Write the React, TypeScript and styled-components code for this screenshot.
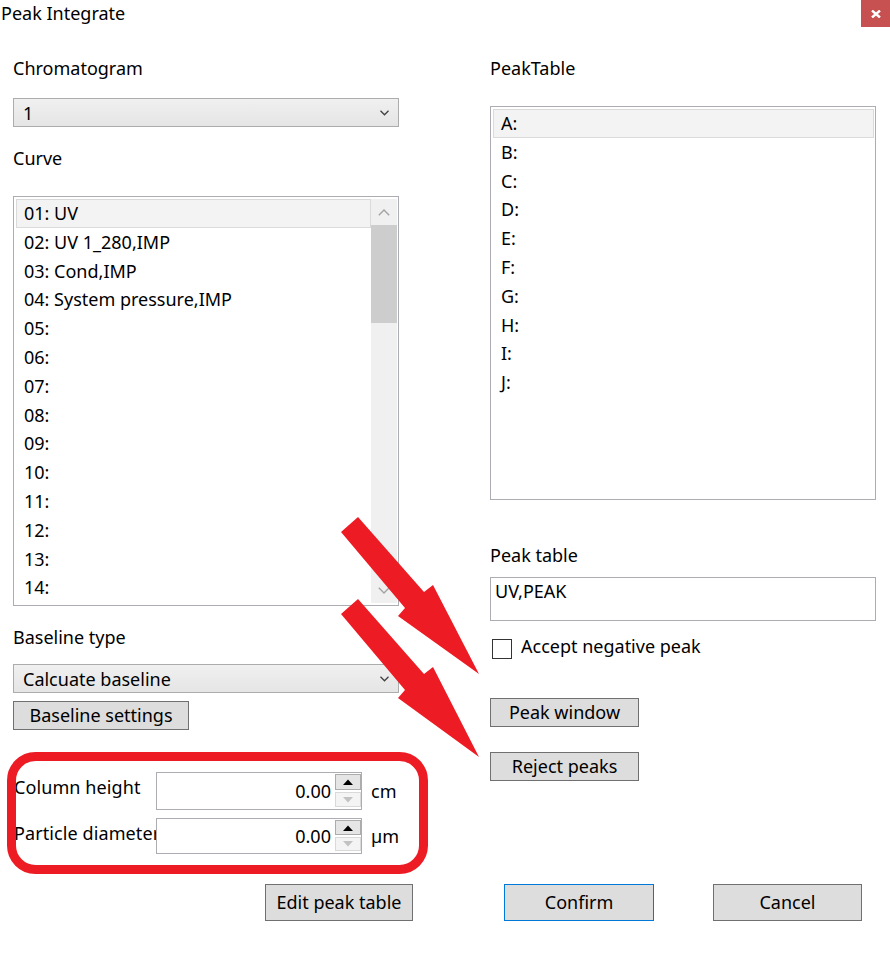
import React from "react";
import styled, { createGlobalStyle } from "styled-components";

const GlobalStyle = createGlobalStyle`
  html, body {
    margin: 0;
    padding: 0;
    background: #fff;
  }
  body {
    font-family: "Noto Sans", "Open Sans", sans-serif;
    font-size: 18px;
    color: #000;
  }
  * {
    box-sizing: border-box;
  }
`

const Window = styled.div`
  position: relative;
  width: 890px;
  height: 962px;
  overflow: hidden;
  background: #fff;
`

const TitleBar = styled.div`
  display: flex;
  justify-content: space-between;
  align-items: flex-start;
  height: 27px;
`

const Title = styled.div`
  padding-left: 1px;
  line-height: 27px;
`

const CloseButton = styled.div`
  display: flex;
  justify-content: center;
  align-items: center;
  width: 29px;
  height: 27px;
  background-color: #c75050;
`

const Columns = styled.div`
  display: flex;
  align-items: flex-start;
  gap: 91px;
  padding-left: 13px;
`

const Column = styled.div`
  display: flex;
  flex-direction: column;
  width: 386px;
`

const FieldLabel = styled.div<{ $top: number }>`
  margin-top: ${(p) => p.$top}px;
  line-height: 24px;
  white-space: nowrap;
`

const ComboBox = styled.div<{ $top: number }>`
  display: flex;
  justify-content: space-between;
  align-items: center;
  margin-top: ${(p) => p.$top}px;
  height: 29px;
  padding: 0 9px 0 9px;
  border: 1px solid #acacac;
  background: linear-gradient(#f0f0f0, #e5e5e5);
  line-height: 24px;
`

const ListBox = styled.div<{ $top: number; $height: number }>`
  display: flex;
  margin-top: ${(p) => p.$top}px;
  height: ${(p) => p.$height}px;
  padding: 2px 1px 2px 2px;
  border: 1px solid #abadb3;
  background: #fff;
  overflow: hidden;
`

const ListItems = styled.div`
  flex: 1;
  overflow: hidden;
`

const ListItem = styled.div<{ $selected?: boolean }>`
  height: 28.8px;
  padding-left: 7px;
  line-height: 26.8px;
  white-space: nowrap;
  border: 1px solid ${(p) => (p.$selected ? "#dadada" : "transparent")};
  background-color: ${(p) => (p.$selected ? "#f3f3f3" : "transparent")};
`

const ScrollBar = styled.div`
  display: flex;
  flex-direction: column;
  width: 26px;
  background-color: #f0f0f0;
`

const ScrollButton = styled.div`
  display: flex;
  justify-content: center;
  align-items: center;
  height: 26px;
`

const ScrollThumb = styled.div`
  height: 98px;
  background-color: #cdcdcd;
`

const ScrollTrack = styled.div`
  flex: 1;
`

const Button = styled.div<{ $top?: number; $left?: number; $width: number; $height: number; $default?: boolean }>`
  display: flex;
  justify-content: center;
  align-items: center;
  margin-top: ${(p) => p.$top ?? 0}px;
  margin-left: ${(p) => p.$left ?? 0}px;
  width: ${(p) => p.$width}px;
  height: ${(p) => p.$height}px;
  padding-bottom: 2px;
  border: 1px solid ${(p) => (p.$default ? "#0078d7" : "#707070")};
  background-color: #dddddd;
  line-height: 24px;
  white-space: nowrap;
`

const TextBox = styled.div<{ $top: number }>`
  margin-top: ${(p) => p.$top}px;
  height: 44px;
  padding: 1px 4px;
  border: 1px solid #abadb3;
  line-height: 24px;
`

const CheckRow = styled.div<{ $top: number }>`
  display: flex;
  align-items: flex-start;
  gap: 9px;
  margin-top: ${(p) => p.$top}px;
  padding-left: 2px;
  line-height: 24px;
`

const CheckBox = styled.div`
  width: 20px;
  height: 20px;
  margin-top: 5px;
  border: 1px solid #333;
  background: #fff;
`

const ParamRow = styled.div<{ $top: number; $height: number }>`
  display: flex;
  align-items: flex-start;
  margin-top: ${(p) => p.$top}px;
  margin-left: 3px;
  height: ${(p) => p.$height}px;
`

/* the dialog clips these captions on both sides, as the original does */
const ParamLabel = styled.div`
  width: 140px;
  margin-top: 3px;
  overflow: hidden;
  white-space: nowrap;
  text-indent: -2px;
  line-height: 24px;
  letter-spacing: 0.1px;
`

const NumberBox = styled.div`
  display: flex;
  align-items: flex-start;
  width: 206px;
  height: 100%;
  border: 1px solid #abadb3;
  background: #fff;
`

const NumberValue = styled.div`
  flex: 1;
  align-self: center;
  padding-right: 4px;
  text-align: right;
  line-height: 24px;
`

const Spinner = styled.div`
  display: flex;
  flex-direction: column;
  gap: 2px;
  width: 26px;
  margin-top: 1px;
`

const SpinButton = styled.div<{ $enabled: boolean; $height: number }>`
  display: flex;
  justify-content: center;
  align-items: center;
  height: ${(p) => p.$height}px;
  border: 1px solid ${(p) => (p.$enabled ? "#acacac" : "#d9d9d9")};
  background-color: ${(p) => (p.$enabled ? "#e5e5e5" : "#f4f4f4")};
`

const Unit = styled.div`
  align-self: center;
  margin-left: 9px;
  line-height: 24px;
`

const Footer = styled.div`
  display: flex;
  margin-top: 30px;
  padding-left: 265px;
`

const Overlay = styled.svg`
  position: absolute;
  left: 0;
  top: 0;
  pointer-events: none;
`

const ComboChevron = () => (
  <svg width="9" height="6" viewBox="0 0 9 6">
    <polyline points="0.5,0.8 4.5,4.8 8.5,0.8" fill="none" stroke="#404040" strokeWidth="1.3" />
  </svg>
)

const ScrollChevron = ({ up }: { up: boolean }) => (
  <svg width="12" height="7" viewBox="0 0 12 7">
    <polyline
      points={up ? "0.8,6.2 6,1 11.2,6.2" : "0.8,0.8 6,6 11.2,0.8"}
      fill="none"
      stroke="#a3a3a3"
      strokeWidth="1.4"
    />
  </svg>
)

const SpinArrow = ({ up, color }: { up: boolean; color: string }) => (
  <svg width="10" height="6" viewBox="0 0 10 6">
    <polygon points={up ? "0,6 5,0.5 10,6" : "0,0 5,5.5 10,0"} fill={color} />
  </svg>
)

const curves = [
  "01: UV",
  "02: UV 1_280,IMP",
  "03: Cond,IMP",
  "04: System pressure,IMP",
  "05:",
  "06:",
  "07:",
  "08:",
  "09:",
  "10:",
  "11:",
  "12:",
  "13:",
  "14:",
]

const peaks = ["A:", "B:", "C:", "D:", "E:", "F:", "G:", "H:", "I:", "J:"]

const params = [
  { label: "Column height", unit: "cm", top: 42, height: 38, up: 16, down: 15 },
  { label: "Particle diameter", unit: "µm", top: 8, height: 36, up: 15, down: 14 },
]

const App = () => {
  return (
    <Window>
      <GlobalStyle />
      <TitleBar>
        <Title>Peak Integrate</Title>
        <CloseButton>
          <svg width="10" height="8" viewBox="0 0 10 8">
            <path d="M1 0.5 L9 7.5 M9 0.5 L1 7.5" stroke="#fff" strokeWidth="2.4" />
          </svg>
        </CloseButton>
      </TitleBar>

      <Columns>
        {/* left side */}
        <Column>
          <FieldLabel $top={29}>Chromatogram</FieldLabel>
          <ComboBox $top={18}>
            <span>1</span>
            <ComboChevron />
          </ComboBox>

          <FieldLabel $top={19}>Curve</FieldLabel>
          <ListBox $top={26} $height={410}>
            <ListItems>
              {curves.map((c, i) => (
                <ListItem key={c} $selected={i === 0}>{c}</ListItem>
              ))}
            </ListItems>
            <ScrollBar>
              <ScrollButton>
                <ScrollChevron up />
              </ScrollButton>
              <ScrollThumb />
              <ScrollTrack />
              <ScrollButton>
                <ScrollChevron up={false} />
              </ScrollButton>
            </ScrollBar>
          </ListBox>

          <FieldLabel $top={19}>Baseline type</FieldLabel>
          <ComboBox $top={15}>
            <span>Calcuate baseline</span>
            <ComboChevron />
          </ComboBox>
          <Button $top={8} $width={176} $height={29}>Baseline settings</Button>

          {params.map((p) => (
            <ParamRow key={p.label} $top={p.top} $height={p.height}>
              <ParamLabel>{p.label}</ParamLabel>
              <NumberBox>
                <NumberValue>0.00</NumberValue>
                <Spinner>
                  <SpinButton $enabled $height={p.up}>
                    <SpinArrow up color="#000" />
                  </SpinButton>
                  <SpinButton $enabled={false} $height={p.down}>
                    <SpinArrow up={false} color="#c2c2c2" />
                  </SpinButton>
                </Spinner>
              </NumberBox>
              <Unit>{p.unit}</Unit>
            </ParamRow>
          ))}
        </Column>

        {/* right side */}
        <Column>
          <FieldLabel $top={29}>PeakTable</FieldLabel>
          <ListBox $top={26} $height={394}>
            <ListItems>
              {peaks.map((p, i) => (
                <ListItem key={p} $selected={i === 0}>{p}</ListItem>
              ))}
            </ListItems>
          </ListBox>

          <FieldLabel $top={43}>Peak table</FieldLabel>
          <TextBox $top={10}>UV,PEAK</TextBox>

          <CheckRow $top={13}>
            <CheckBox />
            <span>Accept negative peak</span>
          </CheckRow>

          <Button $top={39} $width={149} $height={29}>Peak window</Button>
          <Button $top={25} $width={149} $height={29}>Reject peaks</Button>
        </Column>
      </Columns>

      <Footer>
        <Button $width={148} $height={37}>Edit peak table</Button>
        <Button $left={91} $width={150} $height={37} $default>Confirm</Button>
        <Button $left={59} $width={149} $height={37}>Cancel</Button>
      </Footer>

      {/* annotations drawn over the dialog */}
      <Overlay width="890" height="962" viewBox="0 0 890 962">
        <polygon
          points="341,532 405,608 398,616 479,674 433,585 424,592 358,517"
          fill="#ed1c24"
        />
        <polygon
          points="341,614 405,690 398,698 479,757 433,667 424,674 358,599"
          fill="#ed1c24"
        />
        <rect x="11.5" y="756.5" width="412" height="113" rx="24" fill="none" stroke="#ed1c24" strokeWidth="9" />
      </Overlay>
    </Window>
  )
}

export default App;
